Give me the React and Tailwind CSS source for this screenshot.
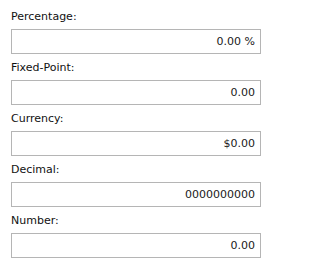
import React from "react";

const fields = [
  { label: "Percentage:", value: "0.00 %" },
  { label: "Fixed-Point:", value: "0.00" },
  { label: "Currency:", value: "$0.00" },
  { label: "Decimal:", value: "0000000000" },
  { label: "Number:", value: "0.00" },
];

export default function App() {
  return (
    <div
      className="w-[273px] h-[267px] bg-white pt-[9px] pl-[11px] flex flex-col gap-[6px]"
      style={{ fontFamily: '"DejaVu Sans", Verdana, sans-serif' }}
    >
      {fields.map((f) => (
        <div key={f.label} className="flex flex-col gap-[4px]">
          <label className="text-[11px] leading-[16px] text-[#111]">
            {f.label}
          </label>
          <input
            readOnly
            value={f.value}
            className="w-[250px] h-[25px] border border-[#b5b5b5] bg-white px-[5px] text-right text-[11px] text-[#1a1a1a] outline-none"
            style={{ fontFamily: '"DejaVu Sans", Verdana, sans-serif' }}
          />
        </div>
      ))}
    </div>
  );
}
